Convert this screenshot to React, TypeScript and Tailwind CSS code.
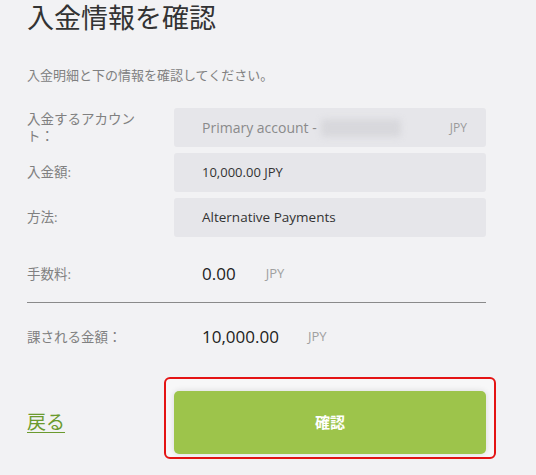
import React from "react";

export default function App() {
  return (
    <div
      className="min-h-[475px] w-[536px] bg-[#f2f2f4] px-[27px] pt-[1px] text-[#333]"
      style={{ fontFamily: '"Open Sans", "Noto Sans CJK JP", sans-serif' }}
    >
      <h1 className="text-[27px] leading-[33px] font-normal text-[#333]">
        入金情報を確認
      </h1>
      <p className="mt-[32px] text-[13px] leading-[18px] text-[#808080]">
        入金明細と下の情報を確認してください。
      </p>

      <div className="mt-[24px] flex flex-col gap-[6px]">
        <div className="flex items-center">
          <div className="w-[147px] shrink-0">
            <div className="w-[112px] text-[13.5px] leading-[17px] text-[#808080]">
              入金するアカウント：
            </div>
          </div>
          <div className="flex h-[39px] w-[312px] items-center rounded-[3px] bg-[#e6e6ea] pl-[28px] pr-[19px] text-[14px] text-[#8a8a8a]">
            <span>Primary account -</span>
            <span className="ml-[4px] h-[18px] w-[80px] rounded-[4px] bg-[#d8d8dc] blur-[3px]" />
            <span className="ml-auto text-[12px] text-[#9a9a9a]">JPY</span>
          </div>
        </div>
        <div className="flex items-center">
          <div className="w-[147px] shrink-0 text-[13.5px] text-[#808080]">入金額:</div>
          <div className="flex h-[39px] w-[312px] items-center rounded-[3px] bg-[#e6e6ea] pl-[28px] text-[13px] text-[#333]">
            10,000.00 JPY
          </div>
        </div>
        <div className="flex items-center">
          <div className="w-[147px] shrink-0 text-[13.5px] text-[#808080]">方法:</div>
          <div className="flex h-[39px] w-[312px] items-center rounded-[3px] bg-[#e6e6ea] pl-[28px] text-[13.5px] text-[#333]">
            Alternative Payments
          </div>
        </div>
      </div>

      <div className="mt-[25px] flex h-[24px] items-center">
        <div className="w-[175px] shrink-0 text-[13.5px] text-[#808080]">手数料:</div>
        <span className="text-[17px] text-[#222]">0.00</span>
        <span className="ml-[30px] text-[13px] text-[#a0a0a0]">JPY</span>
      </div>

      <div className="mt-[16px] h-px w-[459px] bg-[#8a8a8a]" />

      <div className="mt-[22px] flex h-[24px] items-center">
        <div className="w-[175px] shrink-0 text-[13.5px] text-[#808080]">課される金額：</div>
        <span className="text-[17px] text-[#222]">10,000.00</span>
        <span className="ml-[29px] text-[13px] text-[#a0a0a0]">JPY</span>
      </div>

      <div className="mt-[42px] flex items-center">
        <div className="w-[147px] shrink-0">
          <a className="text-[19px] text-[#6b9a2e] underline underline-offset-[3px]">戻る</a>
        </div>
        <div className="relative">
          <div className="pointer-events-none absolute -top-[14px] -left-[10px] -right-[10px] -bottom-[5px] rounded-[6px] border-2 border-[#e41414] bg-[#f7f7f8]" />
          <button className="relative flex h-[63px] w-[312px] items-center justify-center rounded-[5px] bg-[#9dc44b] text-[15px] font-bold text-white shadow-[0_0_6px_rgba(0,0,0,0.12)]">
            確認
          </button>
        </div>
      </div>
    </div>
  );
}
